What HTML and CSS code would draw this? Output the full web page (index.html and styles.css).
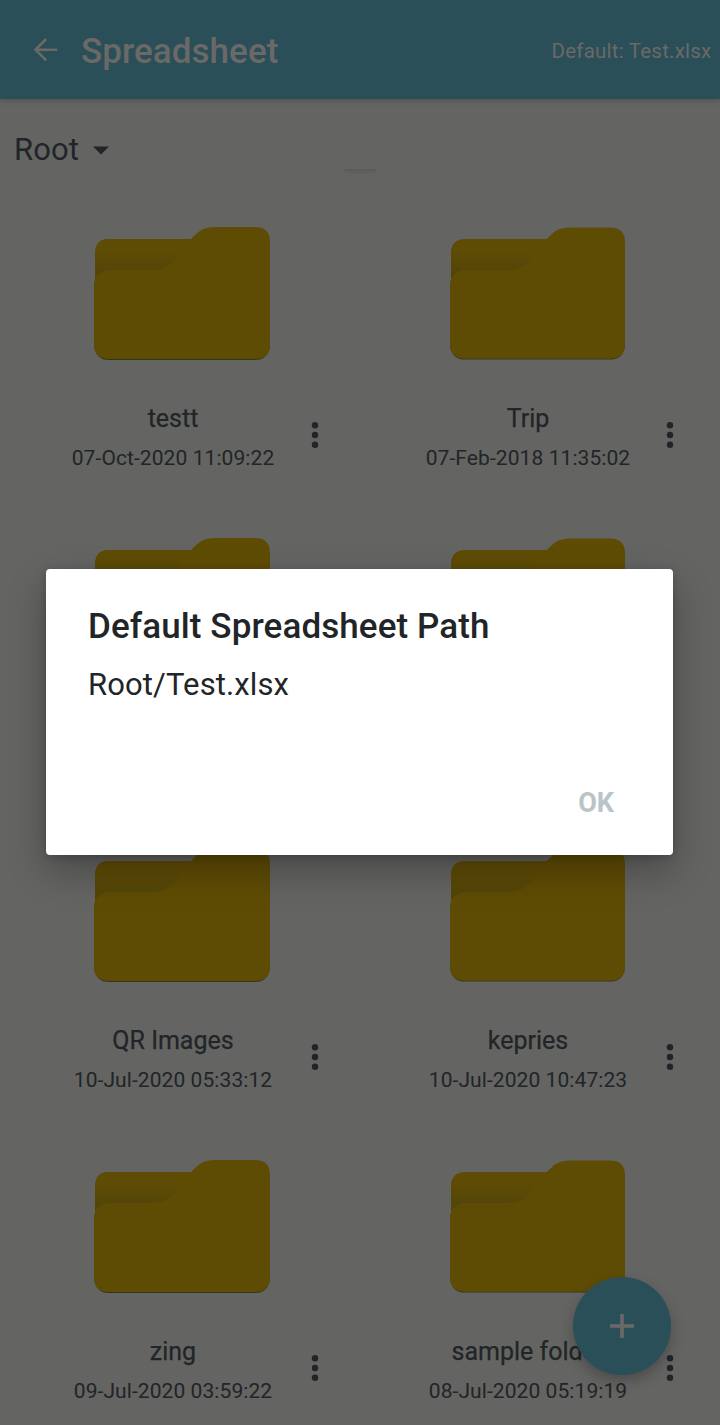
FILE: index.html
```html
<!DOCTYPE html>
<html lang="en">
<head>
<meta charset="utf-8">
<title>Spreadsheet</title>
<link rel="stylesheet" href="styles.css">
</head>
<body>
<svg class="defs" width="0" height="0" aria-hidden="true">
  <defs>
    <linearGradient id="pocket" x1="0" y1="0" x2="0" y2="1">
      <stop offset="0" stop-color="#5f4c04"/>
      <stop offset="0.3" stop-color="#5e4b05"/>
      <stop offset="1" stop-color="#514409"/>
    </linearGradient>
    <symbol id="folder" viewBox="0 0 176 133">
      <path fill="#383516" d="M0 119Q2 133 15 133H161Q174 133 176 119V110H0z"/>
      <path fill="#5f4c04" d="M1 27Q1 12 15 12H97C104 5 108 0 121 0H161Q176 0 176 15V117Q176 132 161 132H15Q0 132 0 117V55L1 53z"/>
      <path fill="url(#pocket)" d="M1 27Q1 12 15 12H97C86 23 81 43 59 43H15Q7 43 1 51z"/>
    </symbol>
    <symbol id="more" viewBox="0 0 8 28">
      <circle cx="4" cy="4.3" r="3.2"/><circle cx="4" cy="14" r="3.2"/><circle cx="4" cy="23.7" r="3.2"/>
    </symbol>
  </defs>
</svg>
<div class="screen">
  <header class="appbar">
    <svg class="back" width="24" height="24" viewBox="0 0 24 24"><path d="M23.3 11.7H2M12.2 1L1.5 11.7 12.2 22.4"/></svg>
    <h1 class="title">Spreadsheet</h1>
    <span class="default">Default: Test.xlsx</span>
  </header>
  <div class="path">
    <span class="path-name">Root</span>
    <svg class="caret" width="16" height="9" viewBox="0 0 16 9"><path d="M0 0.5H16L8 8.5z"/></svg>
    <i class="ripple"></i>
  </div>
  <main class="grid">
    <article class="item"><svg class="folder"><use href="#folder"/></svg><div class="meta"><div class="label"><b class="name">testt</b><time class="date">07-Oct-2020 11:09:22</time></div><svg class="more"><use href="#more"/></svg></div></article>
    <article class="item"><svg class="folder"><use href="#folder"/></svg><div class="meta"><div class="label"><b class="name">Trip</b><time class="date">07-Feb-2018 11:35:02</time></div><svg class="more"><use href="#more"/></svg></div></article>
    <article class="item"><svg class="folder"><use href="#folder"/></svg></article>
    <article class="item"><svg class="folder"><use href="#folder"/></svg></article>
    <article class="item"><svg class="folder"><use href="#folder"/></svg><div class="meta"><div class="label"><b class="name">QR Images</b><time class="date">10-Jul-2020 05:33:12</time></div><svg class="more"><use href="#more"/></svg></div></article>
    <article class="item"><svg class="folder"><use href="#folder"/></svg><div class="meta"><div class="label"><b class="name">kepries</b><time class="date">10-Jul-2020 10:47:23</time></div><svg class="more"><use href="#more"/></svg></div></article>
    <article class="item"><svg class="folder"><use href="#folder"/></svg><div class="meta"><div class="label"><b class="name">zing</b><time class="date">09-Jul-2020 03:59:22</time></div><svg class="more"><use href="#more"/></svg></div></article>
    <article class="item"><svg class="folder"><use href="#folder"/></svg><div class="meta"><div class="label"><b class="name">sample folder</b><time class="date">08-Jul-2020 05:19:19</time></div><svg class="more"><use href="#more"/></svg></div></article>
  </main>
  <button class="fab" aria-label="Add"><svg width="24" height="24" viewBox="0 0 24 24"><path d="M12 0V24M0 12H24"/></svg></button>
  <section class="dialog" role="dialog">
    <h2 class="dialog-title">Default Spreadsheet Path</h2>
    <p class="dialog-text">Root/Test.xlsx</p>
    <button class="ok">OK</button>
  </section>
</div>
</body>
</html>
```

FILE: styles.css
```css
* { box-sizing: border-box; }
body { margin: 0; background: #646462; font-family: Roboto, sans-serif; color: #212527; }
h1, h2, p { margin: 0; }
button { border: 0; padding: 0; background: none; font-family: inherit; }
.defs { position: absolute; }
.screen { position: relative; width: 720px; height: 1425px; overflow: hidden; }

.appbar { display: flex; align-items: center; height: 99px; padding: 0 8.5px 0 34px; background: #2a4f58; color: #6b6967; box-shadow: 0 1px 6px rgba(0, 0, 0, .22); }
.back { fill: none; stroke: #6b6967; stroke-width: 2.6; }
.title { margin: 5px 0 0 23px; font-size: 35px; font-weight: 500; line-height: 42px; letter-spacing: .05px; }
.default { margin: 3px 0 0 auto; font-size: 20.5px; letter-spacing: .22px; }

.path { position: relative; display: flex; align-items: center; height: 101px; padding-left: 14px; }
.path-name { font-size: 31px; letter-spacing: .1px; }
.caret { margin: 1px 0 0 14px; fill: #212527; }
.ripple { position: absolute; left: 343px; top: 70px; width: 34px; height: 6px; border-radius: 0 0 17px 17px / 0 0 6px 6px; background: linear-gradient(#5a5a58, #646462); }

.grid { display: grid; grid-template-columns: 355px 356px; grid-auto-rows: 311px; }
.item { padding-top: 27px; }
.folder { display: block; width: 176px; height: 133px; margin-left: 94px; }
.item:nth-child(even) .folder { width: 175px; margin-left: 95px; }
.meta { display: flex; align-items: center; padding: 41px 35px 0 36px; }
.label { display: flex; flex-direction: column; align-items: center; width: 274px; flex: none; gap: 9px; padding-top: 2px; }
.name { font-size: 25px; font-weight: 400; line-height: 31px; -webkit-text-stroke: .25px #212527; }
.date { font-size: 21px; line-height: 28px; letter-spacing: .08px; white-space: nowrap; }
.more { width: 8px; height: 28px; flex: none; margin: -2px 0 0 1px; fill: #212527; }
.label .date { position: relative; top: 1px; }

.fab { position: absolute; left: 573px; top: 1277px; display: grid; place-items: center; width: 98px; height: 98px; border-radius: 50%; background: #2a4f58; box-shadow: 0 6px 14px rgba(0, 0, 0, .25); }
.fab svg { fill: none; stroke: #6b6967; stroke-width: 3.6; }

.dialog { position: absolute; left: 46px; top: 569px; display: flex; flex-direction: column; width: 627px; height: 286px; padding: 37px 59px 32px 42px; border-radius: 4px; background: #fff; box-shadow: 0 16px 38px rgba(0, 0, 0, .28), 0 2px 8px rgba(0, 0, 0, .18); }
.dialog-title { font-size: 35px; font-weight: 500; line-height: 42px; letter-spacing: .1px; white-space: nowrap; }
.dialog-text { margin-top: 18px; font-size: 31px; line-height: 38px; letter-spacing: .12px; }
.ok { align-self: flex-end; margin-top: auto; font-size: 27px; font-weight: 700; line-height: 40px; color: #b8c4c7; }
```
